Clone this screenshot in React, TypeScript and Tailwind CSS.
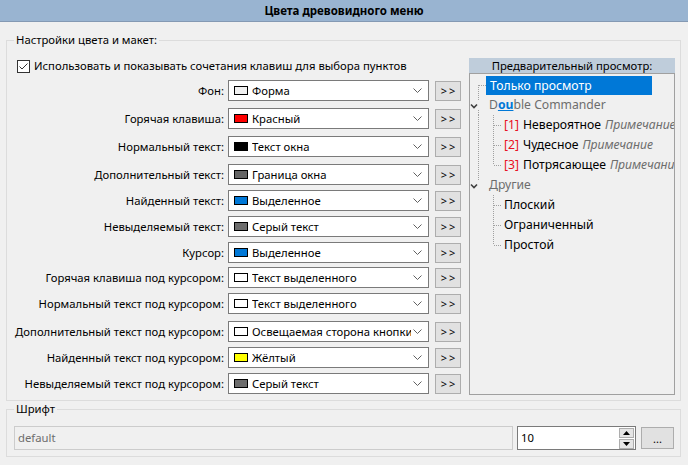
import React from "react";

type Row = { label: string; color: string; name: string; gap: string };

const rows: Row[] = [
  { label: "Фон:", color: "#f0f0f0", name: "Форма", gap: "mt-[6px]" },
  { label: "Горячая клавиша:", color: "#ff0000", name: "Красный", gap: "mt-[7px]" },
  { label: "Нормальный текст:", color: "#000000", name: "Текст окна", gap: "mt-[7px]" },
  { label: "Дополнительный текст:", color: "#646464", name: "Граница окна", gap: "mt-[7px]" },
  { label: "Найденный текст:", color: "#0078d7", name: "Выделенное", gap: "mt-[5px]" },
  { label: "Невыделяемый текст:", color: "#6d6d6d", name: "Серый текст", gap: "mt-[5px]" },
  { label: "Курсор:", color: "#0078d7", name: "Выделенное", gap: "mt-[5px]" },
  { label: "Горячая клавиша под курсором:", color: "#ffffff", name: "Текст выделенного", gap: "mt-[4px]" },
  { label: "Нормальный текст под курсором:", color: "#ffffff", name: "Текст выделенного", gap: "mt-[5px]" },
  { label: "Дополнительный текст под курсором:", color: "#ffffff", name: "Освещаемая сторона кнопки", gap: "mt-[7px]" },
  { label: "Найденный текст под курсором:", color: "#ffff00", name: "Жёлтый", gap: "mt-[5px]" },
  { label: "Невыделяемый текст под курсором:", color: "#6d6d6d", name: "Серый текст", gap: "mt-[5px]" },
];

function Chevron() {
  return (
    <svg width="9" height="5" viewBox="0 0 9 5" className="shrink-0">
      <path d="M0.5 0.5 L4.5 4.5 L8.5 0.5" fill="none" stroke="#606060" strokeWidth="1" />
    </svg>
  );
}

function ColorRow({ row }: { row: Row }) {
  return (
    <div className={`flex items-center h-[21px] ${row.gap}`}>
      <div className="w-[217px] text-right whitespace-nowrap">{row.label}</div>
      <div className="ml-[4px] w-[201px] h-[21px] border border-[#7a7a7a] bg-white flex items-center pl-[5px] pr-[6px]">
        <span className="w-[14px] h-[9px] border border-black shrink-0" style={{ backgroundColor: row.color }} />
        <span className="ml-[4px] flex-1 overflow-hidden whitespace-nowrap">{row.name}</span>
        <span className="ml-[2px]"><Chevron /></span>
      </div>
      <button className="ml-[6px] w-[26px] h-[20px] bg-[#e1e1e1] border border-[#adadad] text-[11px] tracking-[2px] pl-[2px] leading-none">
        &gt;&gt;
      </button>
    </div>
  );
}

// tree connector gutters
const dot = { stroke: "#a0a0a0", strokeWidth: 1, strokeDasharray: "1 1" };

function Expander() {
  return <path d="M2.5 3.5 L5.5 6.5 L8.5 3.5" fill="none" stroke="#404040" strokeWidth="1.6" transform="translate(-1.5 6)" />;
}

function Gutter({ kind }: { kind: string }) {
  const w = kind === "root" || kind === "parent" || kind === "parentLast" ? 16 : 31;
  return (
    <svg width={w} height="20" className="shrink-0">
      {kind === "root" && (
        <>
          <line x1="8.5" y1="10" x2="8.5" y2="20" {...dot} />
          <line x1="9" y1="10.5" x2="16" y2="10.5" {...dot} />
        </>
      )}
      {kind === "parent" && (
        <>
          <line x1="8.5" y1="0" x2="8.5" y2="6" {...dot} />
          <line x1="8.5" y1="15" x2="8.5" y2="20" {...dot} />
          <Expander />
        </>
      )}
      {kind === "parentLast" && (
        <>
          <line x1="8.5" y1="0" x2="8.5" y2="6" {...dot} />
          <Expander />
        </>
      )}
      {(kind === "child" || kind === "childLast") && (
        <line x1="8.5" y1="0" x2="8.5" y2="20" {...dot} />
      )}
      {(kind === "child" || kind === "childLast" || kind === "leaf" || kind === "leafLast") && (
        <>
          <line x1="23.5" y1="0" x2="23.5" y2={kind === "childLast" || kind === "leafLast" ? 10 : 20} {...dot} />
          <line x1="24" y1="10.5" x2="31" y2="10.5" {...dot} />
        </>
      )}
    </svg>
  );
}

function Note({ n, word, note, kind }: { n: string; word: string; note: string; kind: string }) {
  return (
    <div className="flex items-center h-[20px] whitespace-nowrap">
      <Gutter kind={kind} />
      <span className="ml-[3px] text-[#e81123]">[{n}]</span>
      <span className="ml-[4px] text-black">{word}</span>
      <span className="ml-[4px] italic text-[#6d6d6d]">{note}</span>
    </div>
  );
}

export default function App() {
  return (
    <div className="w-[688px] h-[465px] bg-[#f0f0f0] text-[11.3px] leading-[16px] text-black overflow-hidden" style={{ fontFamily: '"Noto Sans", "Liberation Sans", sans-serif' }}>
      <div className="h-[22px] bg-[#99b4d1] border-b border-[#8499b3] flex items-center justify-center font-bold text-[11.5px]">
        Цвета древовидного меню
      </div>

      <fieldset className="mt-[10px] ml-[6px] mr-[7px] border border-[#dcdcdc] pt-[10px] pb-[5px]">
        <legend className="ml-[7px] px-[2px] leading-[16px]">Настройки цвета и макет:</legend>
        <div className="flex">
          <div className="w-[454px]">
            <div className="flex items-center h-[16px] pl-[10px]">
              <span className="w-[13px] h-[13px] border border-[#333333] bg-white flex items-center justify-center">
                <svg width="11" height="11" viewBox="0 0 11 11">
                  <path d="M1.5 5.5 L4 8 L9.5 2.5" fill="none" stroke="#333333" strokeWidth="1" />
                </svg>
              </span>
              <span className="ml-[4px] whitespace-nowrap">Использовать и показывать сочетания клавиш для выбора пунктов</span>
            </div>
            {rows.map((r, i) => (
              <ColorRow key={i} row={r} />
            ))}
          </div>

          <div className="ml-[8px] w-[206px] flex flex-col">
            <div className="h-[15px] bg-[#bfcddb] text-center leading-[15px]">Предварительный просмотр:</div>
            <div className="h-[322px] border border-[#a0a0a0] pt-[1px] text-[12.2px] leading-[20px] overflow-hidden">
              <div className="flex items-center h-[20px]">
                <Gutter kind="root" />
                <span className="w-[166px] h-[19px] bg-[#0078d7] text-white pl-[4px] leading-[19px]">Только просмотр</span>
              </div>
              <div className="flex items-center h-[20px]">
                <Gutter kind="parent" />
                <span className="ml-[3px] text-[#6d6d6d]">
                  D<span className="font-bold underline text-[#0078d7]">ou</span>ble Commander
                </span>
              </div>
              <Note n="1" word="Невероятное" note="Примечание" kind="child" />
              <Note n="2" word="Чудесное" note="Примечание" kind="child" />
              <Note n="3" word="Потрясающее" note="Примечание" kind="childLast" />
              <div className="flex items-center h-[20px]">
                <Gutter kind="parentLast" />
                <span className="ml-[3px] text-[#6d6d6d]">Другие</span>
              </div>
              {["Плоский", "Ограниченный", "Простой"].map((t, i) => (
                <div key={t} className="flex items-center h-[20px]">
                  <Gutter kind={i === 2 ? "leafLast" : "leaf"} />
                  <span className="ml-[3px]">{t}</span>
                </div>
              ))}
            </div>
          </div>
        </div>
      </fieldset>

      <fieldset className="mt-[0px] ml-[6px] mr-[7px] border border-[#dcdcdc] pt-[9px] pb-[6px]">
        <legend className="ml-[7px] px-[2px] leading-[16px]">Шрифт</legend>
        <div className="flex items-center pl-[7px]">
          <div className="w-[499px] h-[24px] border border-[#cccccc] bg-[#f0f0f0] flex items-center pl-[3px] text-[#6d6d6d]">
            default
          </div>
          <div className="ml-[4px] w-[119px] h-[24px] border border-[#7a7a7a] bg-white flex items-center pl-[3px] pr-[1px]">
            <span className="flex-1">10</span>
            <div className="flex flex-col gap-[1px]">
              <span className="w-[15px] h-[10px] bg-[#e5e5e5] border border-[#adadad] flex items-center justify-center">
                <svg width="7" height="4" viewBox="0 0 7 4"><path d="M0 4 L3.5 0 L7 4 Z" fill="#000" /></svg>
              </span>
              <span className="w-[15px] h-[10px] bg-[#e5e5e5] border border-[#adadad] flex items-center justify-center">
                <svg width="7" height="4" viewBox="0 0 7 4"><path d="M0 0 L3.5 4 L7 0 Z" fill="#000" /></svg>
              </span>
            </div>
          </div>
          <button className="ml-[5px] w-[33px] h-[22px] bg-[#e1e1e1] border border-[#adadad] text-[11px] leading-none">...</button>
        </div>
      </fieldset>
    </div>
  );
}
